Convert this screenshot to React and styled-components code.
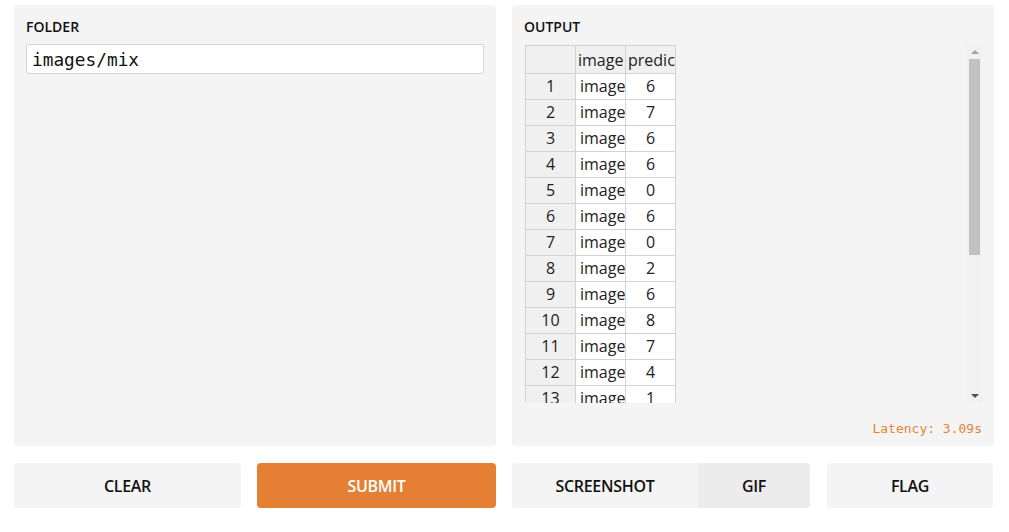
import React from 'react';
import styled, { createGlobalStyle } from 'styled-components';

const GlobalStyle = createGlobalStyle`
  body {
    margin: 0;
    background: #fff;
    font-family: 'Open Sans', 'Liberation Sans', sans-serif;
    color: #1f1f1f;
  }
`;

const Page = styled.div`
  width: 1009px;
  padding: 5px 15px 0 14px;
  box-sizing: border-box;
`;

const Columns = styled.div`
  display: grid;
  grid-template-columns: 482px 482px;
  column-gap: 16px;
`;

const Panel = styled.div`
  background: #f4f4f4;
  border-radius: 4px;
  height: 441px;
  padding: 12px 12px 0 12px;
  box-sizing: border-box;
  display: flex;
  flex-direction: column;
`;

const Label = styled.div`
  font-size: 14px;
  font-weight: 600;
  line-height: 20px;
  color: #111;
  margin-bottom: 7px;
`;

const TextInput = styled.input`
  width: 458px;
  height: 30px;
  box-sizing: border-box;
  border: 1px solid #d6d6d6;
  border-radius: 2px;
  background: #fff;
  padding: 0 5px;
  font-family: 'DejaVu Sans Mono', 'Liberation Mono', monospace;
  font-size: 17.8px;
  color: #111;
  outline: none;
`;

const ScrollArea = styled.div`
  display: flex;
  width: 457px;
  height: 359px;
  margin-left: 1px;
`;

const Viewport = styled.div`
  flex: 1;
  overflow: hidden;
`;

const ScrollBar = styled.div`
  width: 15px;
  display: flex;
  flex-direction: column;
  background: #f1f1f1;
`;

const Arrow = styled.div`
  height: 15px;
  display: flex;
  align-items: center;
  justify-content: center;
  &::before {
    content: '';
    border-left: 4px solid transparent;
    border-right: 4px solid transparent;
    ${p =>
      p.$down
        ? 'border-top: 4px solid #505050;'
        : 'border-bottom: 4px solid #a3a3a3;'}
  }
`;

const Track = styled.div`
  flex: 1;
  padding: 0 2px;
`;

const Thumb = styled.div`
  height: 196px;
  background: #c1c1c1;
`;

const Table = styled.table`
  border-collapse: collapse;
  table-layout: fixed;
  width: 151px;
  margin-top: 1px;
  font-size: 16px;
  color: #222;
`;

const Col = styled.col`
  width: 50px;
`;

const Cell = styled.td`
  border: 1px solid #d3d3d3;
  height: 25px;
  padding: 0 0 0 ${p => (p.$left ? '4px' : '0')};
  overflow: hidden;
  white-space: nowrap;
  text-overflow: clip;
  text-align: ${p => (p.$left ? 'left' : 'center')};
  background: ${p => (p.$grey ? '#f0f0f0' : '#fff')};
  line-height: 25px;
`;

const HeadCell = styled.th`
  border: 1px solid #d3d3d3;
  font-weight: 400;
  height: 27px;
  background: #f0f0f0;
  text-align: left;
  padding: 0 0 0 2px;
  overflow: hidden;
  white-space: nowrap;
`;

const Latency = styled.div`
  margin-top: auto;
  margin-bottom: 10px;
  text-align: right;
  font-family: 'DejaVu Sans Mono', 'Liberation Mono', monospace;
  font-size: 13px;
  color: #e58533;
`;

const ButtonRow = styled.div`
  display: grid;
  grid-template-columns: 227px 239px 298px 167px;
  column-gap: 16px;
  margin-top: 17px;
  & > :nth-child(4) {
    margin-left: 1px;
  }
`;

const Button = styled.button`
  height: 45px;
  border: none;
  border-radius: 4px;
  font-family: 'Open Sans', 'Liberation Sans', sans-serif;
  font-size: 16px;
  font-weight: 600;
  letter-spacing: -0.3px;
  background: ${p => (p.$primary ? '#e47f33' : '#f4f4f4')};
  color: ${p => (p.$primary ? '#fff' : '#111')};
`;

const ButtonGroup = styled.div`
  display: grid;
  grid-template-columns: 186px 112px;
  border-radius: 4px;
  overflow: hidden;
`;

const GroupButton = styled(Button)`
  border-radius: 0;
  background: ${p => (p.$active ? '#ececec' : '#f4f4f4')};
`;

const preds = [6, 7, 6, 6, 0, 6, 0, 2, 6, 8, 7, 4, 1, 9, 3, 5, 2, 8, 1, 0, 7, 4];

export default function App() {
  return (
    <Page>
      <GlobalStyle />
      <Columns>
        <Panel>
          <Label>FOLDER</Label>
          <TextInput defaultValue="images/mix" />
        </Panel>
        <Panel>
          <Label>OUTPUT</Label>
          <ScrollArea>
            <Viewport>
              <Table>
                <colgroup>
                  <Col />
                  <Col />
                  <Col />
                </colgroup>
                <thead>
                  <tr>
                    <HeadCell />
                    <HeadCell>image</HeadCell>
                    <HeadCell>prediction</HeadCell>
                  </tr>
                </thead>
                <tbody>
                  {preds.map((p, i) => (
                    <tr key={i}>
                      <Cell $grey>{i + 1}</Cell>
                      <Cell $left>images/mix/{i + 1}.png</Cell>
                      <Cell>{p}</Cell>
                    </tr>
                  ))}
                </tbody>
              </Table>
            </Viewport>
            <ScrollBar>
              <Arrow />
              <Track>
                <Thumb />
              </Track>
              <Arrow $down />
            </ScrollBar>
          </ScrollArea>
          <Latency>Latency: 3.09s</Latency>
        </Panel>
      </Columns>
      <ButtonRow>
        <Button>CLEAR</Button>
        <Button $primary>SUBMIT</Button>
        <ButtonGroup>
          <GroupButton>SCREENSHOT</GroupButton>
          <GroupButton $active>GIF</GroupButton>
        </ButtonGroup>
        <Button>FLAG</Button>
      </ButtonRow>
    </Page>
  );
}
